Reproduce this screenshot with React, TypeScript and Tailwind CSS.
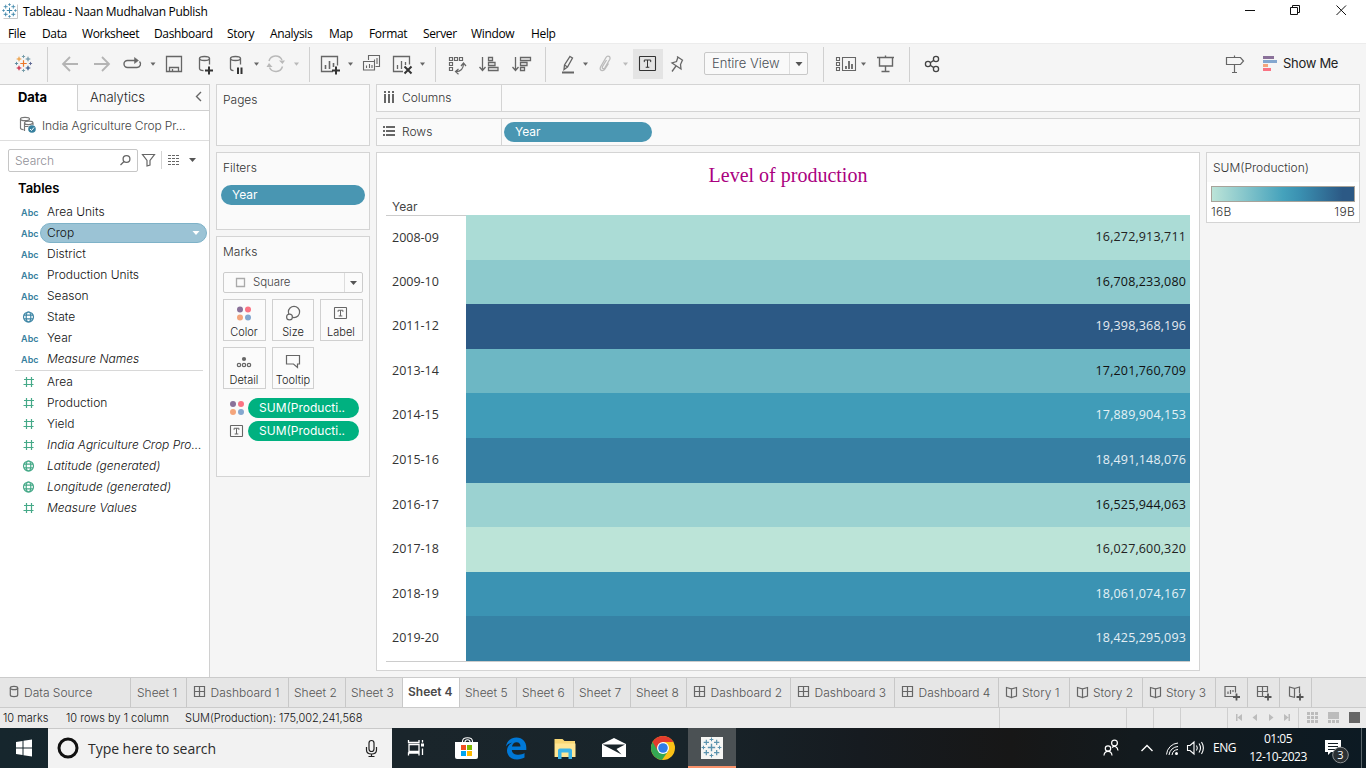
import React from "react";

type GlyphProps = { x: number; y: number; w: number; h: number; c?: string; sw?: number; children: React.ReactNode };

/* Drawing tile whose viewBox starts at (x, y), so neighbouring tiles share one coordinate system. */
function Glyph({ x, y, w, h, c = "#666666", sw = 1.3, children }: GlyphProps) {
  return (
    <svg className="block shrink-0" width={w} height={h} viewBox={`${x} ${y} ${w} ${h}`} fill="none" stroke={c} strokeWidth={sw}>
      {children}
    </svg>
  );
}

function Caret({ x, y = 64, c = "#666666" }: { x: number; y?: number; c?: string }) {
  return <path d={`M${x - 2.5} ${y - 1.5}h5l-2.5 3.2z`} fill={c} stroke="none" />;
}

function Plus({ x, y, r = 3, c, w = 1 }: { x: number; y: number; r?: number; c: string; w?: number }) {
  return <path d={`M${x - r} ${y}h${2 * r}M${x} ${y - r}v${2 * r}`} stroke={c} strokeWidth={w} />;
}

function TableauMark({ x, y, mono, s = 1 }: { x: number; y: number; mono?: string; s?: number }) {
  const c = (v: string) => mono ?? v;
  return (
    <g>
      <Plus x={x} y={y} r={3.2 * s} c={c("#eb762a")} w={1.2 * s} />
      <Plus x={x - 4.5 * s} y={y - 4.5 * s} r={2.3 * s} c={c("#eb9129")} w={1 * s} />
      <Plus x={x + 4.5 * s} y={y - 4.5 * s} r={2.3 * s} c={c("#5b879b")} w={1 * s} />
      <Plus x={x - 4.5 * s} y={y + 4.5 * s} r={2.3 * s} c={c("#c8102e")} w={1.1 * s} />
      <Plus x={x + 4.5 * s} y={y + 4.5 * s} r={2.3 * s} c={c("#1f447e")} w={1.1 * s} />
      <Plus x={x} y={y - 7 * s} r={1.6 * s} c={c("#7099a6")} w={0.9 * s} />
      <Plus x={x} y={y + 7 * s} r={1.6 * s} c={c("#7099a6")} w={0.9 * s} />
      <Plus x={x - 7 * s} y={y} r={1.6 * s} c={c("#59879b")} w={0.9 * s} />
      <Plus x={x + 7 * s} y={y} r={1.6 * s} c={c("#5c6692")} w={0.9 * s} />
    </g>
  );
}

function TBox({ x, y, w, h, c = "#666666" }: { x: number; y: number; w: number; h: number; c?: string }) {
  const cx = x + w / 2;
  return (
    <g stroke={c}>
      <rect x={x} y={y} width={w} height={h} rx="0.5" strokeWidth="1.1" />
      <path d={`M${cx - w * 0.2} ${y + h * 0.4}v${-h * 0.15}h${w * 0.4}v${h * 0.15}M${cx} ${y + h * 0.25}v${h * 0.52}M${cx - 1.8} ${y + h * 0.77}h3.6`} strokeWidth="1" />
    </g>
  );
}

function ColorDots({ x, y }: { x: number; y: number }) {
  return (
    <g stroke="none">
      <circle cx={x} cy={y} r="3" fill="#8a7199" />
      <circle cx={x + 8} cy={y} r="3" fill="#fa7383" />
      <circle cx={x} cy={y + 8} r="3" fill="#f4a57c" />
      <circle cx={x + 8} cy={y + 8} r="3" fill="#84a7cf" />
    </g>
  );
}

function Toolbar() {
  const T = (p: { x: number; w: number; c?: string; sw?: number; children: React.ReactNode }) => <Glyph y={44} h={40} {...p} />;
  const sep = (x: number) => <path d={`M${x + 0.5} 47v35`} stroke="#d0d0d0" strokeWidth="1" />;
  return (
    <div className="flex h-[41px] shrink-0 items-end border-t border-[#ececec] bg-[#f5f5f5]">
      <T x={0} w={56}><TableauMark x={23.5} y={63.5} />{sep(47)}</T>
      <T x={56} w={60} c="#b4b4b4" sw={1.8}>
        <path d="M78 64H63M70 57l-7 7 7 7" />
        <path d="M94 64h15M102 57l7 7-7 7" />
      </T>
      <T x={116} w={44} sw={1.400}>
        <path d="M137 60.500h-9.500a3.500 3.500 0 0 0 0 7h9.500a3.500 3.500 0 0 0 2.500-6" />
        <path d="M134.500 57.500l4 3-4 3z" fill="#666666" strokeWidth="0.5" />
        <Caret x={153} />
      </T>
      <T x={160} w={30}><path d="M166.500 56.500h15v15h-15zM169.500 71.500v-4h9v4M172.500 71.500v-2.500" /></T>
      <T x={190} w={72}>
        <ellipse cx="204.500" cy="58.500" rx="5" ry="2" />
        <path d="M199.500 58.500v10c0 1.500 2 2 4 2.200M209.500 58.500v6" />
        <path d="M205 70.500h8M209 66.500v8" stroke="#333333" strokeWidth="2" />
        <ellipse cx="235.500" cy="58.500" rx="5" ry="2" />
        <path d="M230.500 58.500v10c0 1.500 1.500 2 3 2.200M240.500 58.500v6" />
        <path d="M238 67.500v6.500M241.500 67.500v6.500" stroke="#333333" strokeWidth="2" />
        <Caret x={256.500} />
      </T>
      <T x={262} w={52} c="#b9b9b9" sw={1.5}>
        <path d="M269 61a7 7 0 0 1 13-1M282.500 66.500a7 7 0 0 1-13 1" />
        <path d="M279 60.500h6l-2.500 3.500zM266.500 67l2.500-4 3.500 4z" fill="#b9b9b9" stroke="none" />
        <Caret x={296.500} c="#b9b9b9" />{sep(309)}
      </T>
      <T x={314} w={44}>
        <path d="M333 71.500h-11.500v-15h16v9" />
        <path d="M325.500 69v-4M329.500 69v-8M333.500 67v-4" strokeWidth="1.600" />
        <path d="M332 70.500h8M336 66.500v8" stroke="#333333" strokeWidth="2" />
        <Caret x={350.500} />
      </T>
      <T x={358} w={28} sw={1.100}>
        <path d="M368.500 60v-4.500h11v11h-4M371.500 62v-1M374.500 64v-4.500M377 64v-6M363.500 61.500h11v8.500h-11zM366.500 68v-2.500M369.500 68v-4M372 68v-3" />
      </T>
      <T x={386} w={56}>
        <path d="M403 71.500h-9.500v-15h16v8M397.500 69v-4M401.500 69v-8M405.500 65v-3" />
        <path d="M404.500 66.500l7 7M411.500 66.500l-7 7" stroke="#333333" strokeWidth="2" />
        <Caret x={422.500} />{sep(435)}
      </T>
      <T x={442} w={30} sw={1.200}>
        <path d="M449.500 57.500h3v3h-3zM454.500 57.500h3v3h-3zM459.500 57.500h3v3h-3zM449.500 62.500h3v3h-3zM449.500 67.500h3v3h-3z" />
        <path d="M463.500 64c-.2 5-3 7.500-7.500 7.700M461 66l2.500-3 2.500 3M458.500 69l-3 2.600 3 2.600" />
      </T>
      <T x={472} w={34}>
        <path d="M482.500 57v13M479.500 67l3 3.500 3-3.500M488.500 57.500h4v3h-4zM488.500 62.500h6.500v3h-6.500zM488.500 67.500h9.500v3h-9.500z" />
      </T>
      <T x={506} w={46}>
        <path d="M515.500 57v13M512.500 67l3 3.500 3-3.500M520.500 57.500h10v3h-10zM520.500 62.500h6.500v3h-6.500zM520.500 67.500h4v3h-4z" />
        {sep(545)}
      </T>
      <T x={552} w={40}>
        <path d="M570 56.500l2.500 1.500-5 9-3.500 2.500.5-4.500zM564.500 65l3 2" />
        <path d="M562 72.500h12" strokeWidth="2" />
        <Caret x={585.500} />
      </T>
      <T x={592} w={41} c="#bbbbbb">
        <path d="M606.500 60l-4 6.500c-1 2 1.200 3 2.200 1.500l5-8.500c1.500-3-2.200-4.500-3.700-2l-5.500 9.500c-1.500 3.500 2.500 5 4.500 2l3.500-5.500" />
        <Caret x={625.500} c="#bbbbbb" />
      </T>
      <div className="mb-[5px] h-[30px] w-[30px] shrink-0 bg-[#e4e4e4]">
        <Glyph x={633} y={49} w={30} h={30} c="#333333"><TBox x={639.500} y={56.500} w={16} h={14} c="#333333" /></Glyph>
      </div>
      <T x={663} w={41}>
        <path d="M677 56.500l6 4M678 57l-1.500 4.500-4.500 1.500 9 6-.5-4.500 2-4.500M676 66l-4 5.500" />
      </T>
      <div className="mb-[9px] flex h-[23px] w-[104px] shrink-0 items-center rounded-[2px] border border-[#c8c8c8] bg-[#f9f9f9]">
        <span className="w-[84px] whitespace-nowrap pl-[7px] text-[13px] text-[#4b5057]">Entire View</span>
        <div className="h-[21px] border-l border-[#dddddd]">
          <Glyph x={789} y={53} w={17} h={21}><path d="M794.500 62h7l-3.500 4.200z" fill="#555" stroke="none" /></Glyph>
        </div>
      </div>
      <T x={808} w={62}>
        {sep(823)}
        <path d="M836.500 57.500h3v3h-3zM836.500 62.500h3v3h-3zM836.500 67.500h3v3h-3zM842.500 57.500h13v13h-13z" strokeWidth="1.100" />
        <path d="M846 69v-3M849 69v-8M852 69v-5" strokeWidth="1.800" />
        <Caret x={863.500} />
      </T>
      <T x={870} w={46}>
        <path d="M877 57.500h17M879.500 57.500v8.500h13v-8.500M885.500 66v5M881.500 71.500h8M885.500 55.500v2" strokeWidth="1.400" />
        {sep(909)}
      </T>
      <T x={916} w={30} c="#444444">
        <circle cx="928" cy="64" r="2.600" /><circle cx="936" cy="59" r="2.600" /><circle cx="936" cy="69" r="2.600" />
        <path d="M930.200 62.700l3.600-2.300M930.200 65.300l3.600 2.300" />
      </T>
      <div className="grow" />
      <T x={1216} w={66} sw={1.200}>
        <path d="M1226.500 57.500h14l3 3.500-3 3.500h-14zM1234.500 55.500v2M1234.500 64.500v8M1232 72.500h5" />
        <g stroke="none">
          <path d="M1263 56h11v3h-11z" fill="#8a7199" /><path d="M1263 60h14v3h-14z" fill="#84a7cf" />
          <path d="M1263 64h5v3h-5z" fill="#f4a57c" /><path d="M1263 68h8v3h-8z" fill="#fa7383" />
        </g>
      </T>
      <span className="mb-[10px] w-[84px] whitespace-nowrap pl-px text-[13px] font-normal leading-[21px] tracking-[-0.3px] text-[#222222]">Show Me</span>
    </div>
  );
}

function FieldIcon({ kind }: { kind: string }) {
  if (kind === "abc") return <span className="w-[47px] pl-[21px] pt-[2px] text-[9px] font-semibold tracking-[0.1px] text-[#37809e]">Abc</span>;
  const isHash = kind === "hash";
  const c = kind === "globeBlue" ? "#3f87a6" : "#45a988";
  return (
    <Glyph x={0} y={0} w={47} h={21} c={c} sw={1.200}>
      {isHash ? (
        <path d="M24 8.500h10M23.500 13.500h10M26.500 6v10M31.500 6v10" />
      ) : (
        <g><circle cx="28.500" cy="11" r="5" /><ellipse cx="28.500" cy="11" rx="2.300" ry="5" /><path d="M24 9.200h9M24 12.800h9" /></g>
      )}
    </Glyph>
  );
}

type FieldRow = { kind: string; name: string; italic?: boolean; selected?: boolean };

const dimensions: FieldRow[] = [
  { kind: "abc", name: "Area Units" },
  { kind: "abc", name: "Crop", selected: true },
  { kind: "abc", name: "District" },
  { kind: "abc", name: "Production Units" },
  { kind: "abc", name: "Season" },
  { kind: "globeBlue", name: "State" },
  { kind: "abc", name: "Year" },
  { kind: "abc", name: "Measure Names", italic: true },
];

const measures: FieldRow[] = [
  { kind: "hash", name: "Area" },
  { kind: "hash", name: "Production" },
  { kind: "hash", name: "Yield" },
  { kind: "hash", name: "India Agriculture Crop Pro...", italic: true },
  { kind: "globe", name: "Latitude (generated)", italic: true },
  { kind: "globe", name: "Longitude (generated)", italic: true },
  { kind: "hash", name: "Measure Values", italic: true },
];

function Field({ f }: { f: FieldRow }) {
  return (
    <div className="flex h-[21px] items-center whitespace-nowrap text-[12px] text-[#111111]">
      <FieldIcon kind={f.kind} />
      {f.selected ? (
        <div className="-ml-[7px] flex h-5 w-[167px] items-center justify-between rounded-full border border-[#7eb2c8] bg-[#9bc3d5] pl-[6px]">
          <span>{f.name}</span>
          <Glyph x={186} y={223} w={20} h={18}><path d="M192.500 230h7l-3.500 4z" fill="#fff" stroke="none" /></Glyph>
        </div>
      ) : (
        <span className={f.italic ? "italic" : ""}>{f.name}</span>
      )}
    </div>
  );
}

function DataPane() {
  return (
    <aside className="flex w-[210px] shrink-0 flex-col border-r border-t border-[#d0d0d0] bg-white">
      <div className="flex h-[26px] shrink-0">
        <div className="w-[77px] pl-[18px] text-[13px] font-bold leading-[25px] tracking-[-0.1px] text-black">Data</div>
        <div className="flex grow justify-between border-b border-l border-[#d0d0d0] bg-[#fafafa] pl-3 text-[13px] leading-[25px] text-[#222222]">
          Analytics
          <Glyph x={189} y={85} w={20} h={24} sw={1.400}><path d="M201 92l-4.500 4.500 4.500 4.500" /></Glyph>
        </div>
      </div>
      <div className="flex h-[30px] shrink-0 items-center border-b border-[#dedede]">
        <Glyph x={0} y={111} w={42} h={29} c="#777777" sw={1.200}>
          <ellipse cx="25" cy="119" rx="4.500" ry="1.700" />
          <path d="M20.500 119v9c0 1 1.500 1.600 3 1.700M24.500 123c0-2.500 8.500-2.500 8.500 0v2M24.500 123v8M24.500 123.500c1.500 1.500 6 1.500 8 0M24.500 126.500h4" />
          <circle cx="32" cy="129" r="3.800" fill="#37809e" stroke="none" />
          <path d="M30 129l1.500 1.500 2.500-3" stroke="#fff" strokeWidth="1" />
        </Glyph>
        <span className="whitespace-nowrap text-[12px] tracking-[-0.1px] text-[#444444]">India Agriculture Crop Pr...</span>
      </div>
      <div className="flex h-[39px] shrink-0 items-center pl-2">
        <div className="flex h-[23px] w-[130px] items-center justify-between rounded-[2px] border border-[#c6c6c6] pl-[6px]">
          <span className="text-[12px] text-[#8f8f96]">Search</span>
          <Glyph x={117} y={150} w={20} h={21}><circle cx="126.500" cy="159" r="3.400" /><path d="M124 161.500l-3.500 3.500" /></Glyph>
        </div>
        <Glyph x={138} y={150} w={62} h={22}>
          <path d="M142.500 154.500h12l-4.500 6v4.500l-3 1v-5.500z" strokeWidth="1.200" />
          <path d="M161.500 151v18" stroke="#d4d4d4" strokeWidth="1" />
          <path d="M168 155.500h12M168 158.500h12M168 161.500h12M168 164.500h12" strokeDasharray="3 1" strokeWidth="1.100" />
          <path d="M189 158h7l-3.500 4z" fill="#555" stroke="none" />
        </Glyph>
      </div>
      <div className="h-[21px] shrink-0 pl-[18px] text-[13px] font-semibold leading-[17px] text-black">Tables</div>
      {dimensions.map((f) => <Field key={f.name} f={f} />)}
      <div className="ml-[15px] mr-[6px] mt-px border-t border-[#d8d8d8]" />
      {measures.map((f) => <Field key={f.name} f={f} />)}
    </aside>
  );
}

function MarkButton({ label, children }: { label: string; children: React.ReactNode }) {
  return (
    <div className="flex h-[42px] flex-col border border-[#d0d0d0] bg-[#fbfbfb]">
      <svg className="block shrink-0" width="40" height="25" viewBox="0 0 40 25" fill="none" stroke="#666" strokeWidth="1.200">{children}</svg>
      <span className="w-10 self-start whitespace-nowrap text-center text-[11px] leading-[14px] text-[#222222]">{label}</span>
    </div>
  );
}

const cardClass = "shrink-0 border border-[#d4d4d4] bg-[#fafafa] text-[12px] text-[#333333]";

function Cards() {
  return (
    <div className="ml-[6px] flex w-[154px] shrink-0 flex-col gap-[6px]">
      <div className={`${cardClass} h-[62px] pl-[6px] pt-[6px]`}>Pages</div>
      <div className={`${cardClass} h-[78px] px-1 pt-[6px]`}>
        <div className="pl-[2px]">Filters</div>
        <div className="mt-2 h-5 rounded-full bg-[#4996b2] pl-[11px] text-[12px] font-normal leading-[20px] text-white">Year</div>
      </div>
      <div className={`${cardClass} flex h-[241px] flex-col px-[6px] pt-[6px]`}>
        <div>Marks</div>
        <div className="mt-[11px] flex h-[21px] w-[140px] shrink-0 items-center rounded-[2px] border border-[#cccccc] bg-[#fbfbfb]">
          <Glyph x={224} y={273} w={29} h={19} c="#aaaaaa"><path d="M236.500 278.500h8v8h-8z" /></Glyph>
          <span className="w-[91px] pt-px text-[11.500px] tracking-[-0.1px] text-[#444444]">Square</span>
          <div className="border-l border-[#dddddd]"><Glyph x={345} y={273} w={17} h={19}><path d="M350 281h7l-3.500 4z" fill="#555" stroke="none" /></Glyph></div>
        </div>
        <div className="mt-[6px] grid w-[140px] grid-cols-[43px_42px_43px] gap-[6px]">
          <MarkButton label="Color"><ColorDots x={16} y={9.500} /></MarkButton>
          <MarkButton label="Size"><circle cx="21" cy="12" r="5.600" fill="#fbfbfb" /><circle cx="16.500" cy="17" r="2.900" fill="#fbfbfb" /></MarkButton>
          <MarkButton label="Label"><TBox x={13.500} y={7.500} w={12} h={11} /></MarkButton>
          <MarkButton label="Detail">
            <circle cx="20" cy="11" r="2.100" fill="#666" stroke="none" />
            <circle cx="15" cy="17" r="1.700" /><circle cx="20" cy="17" r="1.700" /><circle cx="25" cy="17" r="1.700" />
          </MarkButton>
          <MarkButton label="Tooltip"><path d="M13.500 7.500h13v8.500h-2v3.500l-4-3.500h-7z" /></MarkButton>
        </div>
        <div className="mt-[9px] flex h-5 shrink-0 items-center text-[12px] font-normal text-white">
          <Glyph x={223} y={398} w={25} h={20}><ColorDots x={233} y={404} /></Glyph>
          <span className="h-5 w-[111px] rounded-full bg-[#00b180] pl-[11px] leading-[20px]">SUM(Producti..</span>
        </div>
        <div className="mt-[3px] flex h-5 shrink-0 items-center text-[12px] font-normal text-white">
          <Glyph x={223} y={421} w={25} h={20}><TBox x={230.500} y={425.500} w={12} h={11} /></Glyph>
          <span className="h-5 w-[111px] rounded-full bg-[#00b180] pl-[11px] leading-[20px]">SUM(Producti..</span>
        </div>
      </div>
    </div>
  );
}

const chartRows = [
  { year: "2008-09", value: "16,272,913,711", cls: "h-[45px] bg-[#abdcd6] text-[#222222]" },
  { year: "2009-10", value: "16,708,233,080", cls: "h-[44px] bg-[#8dcacd] text-[#111111]" },
  { year: "2011-12", value: "19,398,368,196", cls: "h-[45px] bg-[#2c5985] text-[#e4eaf0]" },
  { year: "2013-14", value: "17,201,760,709", cls: "h-[44px] bg-[#6db7c4] text-[#111111]" },
  { year: "2014-15", value: "17,889,904,153", cls: "h-[45px] bg-[#409cb8] text-[#e4f2f6]" },
  { year: "2015-16", value: "18,491,148,076", cls: "h-[45px] bg-[#367fa3] text-[#e4eef4]" },
  { year: "2016-17", value: "16,525,944,063", cls: "h-[44px] bg-[#9bd2d1] text-[#111111]" },
  { year: "2017-18", value: "16,027,600,320", cls: "h-[45px] bg-[#bce4d8] text-[#222222]" },
  { year: "2018-19", value: "18,061,074,167", cls: "h-[44px] bg-[#3b93b3] text-[#e4f2f6]" },
  { year: "2019-20", value: "18,425,295,093", cls: "h-[45px] bg-[#3682a5] text-[#e4eef4]" },
];

function Workspace() {
  return (
    <div className="ml-[6px] flex w-[984px] shrink-0 flex-col gap-[6px]">
      <div className={`${cardClass} flex h-7`}>
        <div className="flex w-[125px] items-center border-r border-[#d4d4d4]">
          <Glyph x={377} y={85} w={25} h={26} sw={2}>
            <path d="M385 91v12M389 91v12M393 91v12" strokeWidth="2" />
            <path d="M383 93.500h12" stroke="#fafafa" strokeWidth="1" />
          </Glyph>
          <span>Columns</span>
        </div>
      </div>
      <div className={`${cardClass} flex h-7 items-center`}>
        <div className="flex h-full w-[125px] items-center border-r border-[#d4d4d4]">
          <Glyph x={377} y={119} w={25} h={26}><path d="M383 127h12M383 131h12M383 135h12" strokeDasharray="2 1 10" strokeWidth="2" /></Glyph>
          <span>Rows</span>
        </div>
        <div className="ml-[2px] h-5 w-[148px] rounded-full bg-[#4996b2] pl-[11px] font-normal leading-[20px] text-white">Year</div>
      </div>
      <div className="flex items-start gap-[6px]">
        <div className="h-[519px] w-[824px] border border-[#d4d4d4] bg-white px-[9px]">
          <div className="h-[45px] pt-[9px] text-center font-['Liberation_Serif',serif] text-[20px] font-normal leading-[26px] text-[#aa0080]">Level of production</div>
          <div className="h-[17px] pl-[6px] text-[12px] font-normal leading-[17px] text-[#444444]">Year</div>
          <div className="flex flex-col border-b border-t border-[#cccccc]">
            {chartRows.map((r, i) => (
              <div key={r.year} className="flex font-['Open_Sans',sans-serif] text-[12.500px] font-normal text-[#333333]">
                <div className="flex w-[80px] items-center pl-[6px]">{r.year}</div>
                <div className={`${r.cls} ${i === 0 ? "-mt-px" : ""} flex w-[724px] items-center justify-end pr-1 tracking-[0.150px]`}>{r.value}</div>
              </div>
            ))}
          </div>
        </div>
        <div className="h-[71px] w-[154px] border border-[#d4d4d4] bg-white text-[12px] text-[#333333]">
          <div className="h-[29px] bg-[#fafafa] pl-[6px] leading-[30px]">SUM(Production)</div>
          <div className="mx-1 mt-1 h-4 border border-[#a8a39a] bg-[linear-gradient(90deg,#bce4d8_0%,#8dcacd_20%,#45a2bc_50%,#3a90b1_62%,#2c5985_92%)]" />
          <div className="flex justify-between px-1 leading-[19px] tracking-[0.3px]"><span>16B</span><span>19B</span></div>
        </div>
      </div>
    </div>
  );
}

const gridPath = (x: number) => `M${x} 686.500h10v10h-10zM${x + 5} 686.500v10M${x} 691.500h10`;
const bookPath = (x: number) => `M${x} 687.500l5 1.500v8.500l-5-1.500zM${x + 10} 687.500l-5 1.500v8.500l5-1.500zM${x} 687v9M${x + 10} 687v9`;

const sheetTabs = [
  { name: "Data Source", icon: "db", cls: "w-[131px] pl-[5px]" },
  { name: "Sheet 1", icon: "", cls: "w-[56px] pl-[6px]" },
  { name: "Dashboard 1", icon: "grid", cls: "w-[102px] pl-[4px]" },
  { name: "Sheet 2", icon: "", cls: "w-[57px] pl-[5px]" },
  { name: "Sheet 3", icon: "", cls: "w-[57px] pl-[5px]" },
  { name: "Sheet 4", icon: "", cls: "w-[57px] pl-[5px] bg-white font-semibold text-[#4a4a4a] pb-[2px]" },
  { name: "Sheet 5", icon: "", cls: "w-[57px] pl-[5px]" },
  { name: "Sheet 6", icon: "", cls: "w-[57px] pl-[5px]" },
  { name: "Sheet 7", icon: "", cls: "w-[57px] pl-[5px]" },
  { name: "Sheet 8", icon: "", cls: "w-[56px] pl-[5px]" },
  { name: "Dashboard 2", icon: "grid", cls: "w-[104px] pl-[4px]" },
  { name: "Dashboard 3", icon: "grid", cls: "w-[104px] pl-[4px]" },
  { name: "Dashboard 4", icon: "grid", cls: "w-[104px] pl-[4px]" },
  { name: "Story 1", icon: "book", cls: "w-[71px] pl-[4px]" },
  { name: "Story 2", icon: "book", cls: "w-[73px] pl-[4px]" },
  { name: "Story 3", icon: "book", cls: "w-[73px] pl-[4px]" },
];

function SheetTabs() {
  return (
    <div className="flex h-[31px] shrink-0 border-b border-t border-[#cbcbcb] bg-[#e6e6e6] text-[12px] text-[#555555]">
      {sheetTabs.map((t) => (
        <div key={t.name} className={`${t.cls} flex shrink-0 items-center whitespace-nowrap border-r border-[#c8c8c8]`}>
          {t.icon !== "" && (
            <Glyph x={0} y={678} w={t.icon === "grid" ? 19.500 : 19} h={29} sw={1.200}>
              {t.icon === "grid" && <path d={gridPath(3.500)} />}
              {t.icon === "book" && <path d={bookPath(3.500)} />}
              {t.icon === "db" && <g><ellipse cx="9" cy="688" rx="3.700" ry="1.700" /><path d="M5.300 688v7c0 2.200 7.400 2.200 7.400 0v-7" /></g>}
            </Glyph>
          )}
          {t.name}
        </div>
      ))}
      <div className="border-r border-[#c8c8c8]">
        <Glyph x={1216} y={678} w={31} h={29} sw={1.200}><path d="M1233 696.500h-8v-10h10.500v6M1228 694v-2.500M1230.500 694v-4M1233 692v-2" /><path d="M1233 697h7M1236.500 693.500v7" stroke="#555" strokeWidth="1.800" /></Glyph>
      </div>
      <div className="border-r border-[#c8c8c8]">
        <Glyph x={1248} y={678} w={31} h={29} sw={1.200}><path d="M1264 696.500h-6.500v-10h10v6M1262.500 686.500v10M1257.500 691.500h10" /><path d="M1264.500 697h7M1268 693.500v7" stroke="#555" strokeWidth="1.800" /></Glyph>
      </div>
      <div className="border-r border-[#c8c8c8]">
        <Glyph x={1280} y={678} w={31} h={29} sw={1.200}><path d="M1295 697.500l-5.500-1.500v-9l5 1.500v8.500M1294.500 688.500l5-1.500v6" /><path d="M1296.500 697h7M1300 693.500v7" stroke="#555" strokeWidth="1.800" /></Glyph>
      </div>
    </div>
  );
}

function StatusBar() {
  return (
    <div className="flex h-5 shrink-0 items-center whitespace-nowrap bg-[#ebebeb] text-[11px] text-[#111111]">
      <span className="w-[66px] pl-[3px]">10 marks</span>
      <span className="w-[119px]">10 rows by 1 column</span>
      <span className="w-[814px]">SUM(Production): 175,002,241,568</span>
      <Glyph x={999} y={708} w={367} h={20} c="#cfcfcf" sw={1}>
        <path d="M999.500 708v20M1126.500 708v20M1153.500 708v20M1180.500 708v20M1227.500 708v20M1298.500 708v20" />
        <g fill="#bcbcbc" stroke="none">
          <path d="M1236 714h1.500v7h-1.500zM1242 714v7l-4.500-3.500z" />
          <path d="M1257 714v7l-4.500-3.500zM1269 714v7l4.500-3.500z" />
          <path d="M1288.500 714h1.500v7h-1.500zM1284 714v7l4.500-3.500z" />
          <path d="M1307 712h3v3h-3zM1311 712h3v3h-3zM1315 712h3v3h-3zM1307 716h3v3h-3zM1311 716h3v3h-3zM1315 716h3v3h-3zM1307 720h3v3h-3zM1311 720h3v3h-3zM1315 720h3v3h-3z" />
          <path d="M1328 712h11v7h-11zM1328 720h3v3h-3zM1332 720h3v3h-3zM1336 720h3v3h-3z" />
          <path d="M1349 712h11v11h-11z" fill="#666666" />
        </g>
      </Glyph>
    </div>
  );
}

function Taskbar() {
  return (
    <div className="flex h-10 shrink-0 bg-[linear-gradient(90deg,#16262d_0%,#1a252b_30%,#18242a_50%,#161b20_63%,#171717_74%,#131a1e_83%,#0c1a23_100%)] font-['Open_Sans',sans-serif] font-normal text-white">
      <Glyph x={0} y={728} w={48} h={40}>
        <path d="M16 742l6.500-1v6.500h-6.500zM23.500 740.800l8.500-1.200v7.900h-8.500zM16 748.500h6.500v6.500l-6.500-1zM23.500 748.500h8.500v7.900l-8.500-1.200z" fill="#fff" stroke="none" />
      </Glyph>
      <div className="flex w-[344px] shrink-0 items-center border-t border-[#c9c9c9] bg-[#f2f2f2]">
        <Glyph x={48} y={729} w={40} h={39} c="#111"><circle cx="68" cy="748" r="9" strokeWidth="3" /></Glyph>
        <span className="w-[270px] whitespace-nowrap text-[14px] tracking-[-0.040px] text-[#2b2b2b]">Type here to search</span>
        <Glyph x={358} y={729} w={33} h={39} c="#222" sw={1.200}>
          <rect x="369" y="740.500" width="5" height="11" rx="2.500" /><path d="M366.500 747v3c0 2 1.500 4 5 4s5-2 5-4v-3M371.500 754v2.500M368.500 756.500h6" />
        </Glyph>
      </div>
      <Glyph x={392} y={728} w={296} h={40} c="#fff" sw={1.300}>
        <path d="M408.500 740v2.500h10.500v-2.500M409 744.500h10v7h-10zM408.500 755.500v-2.500h10.500v2.500M422.500 740v2.500M422.500 748.500v6.500" />
        <rect x="421" y="743.500" width="3" height="3" fill="#fff" stroke="none" />
        <path d="M462.500 743v-1.500c0-5 10-5 10 0v1.500M465 743v-1c0-3 5-3 5 0v1" strokeWidth="1.100" />
        <path d="M455 742h23v15a2 2 0 0 1-2 2h-19a2 2 0 0 1-2-2z" fill="#fff" stroke="none" />
        <g stroke="none">
          <path d="M461 745h5v5h-5z" fill="#f25022" /><path d="M467 745h5v5h-5z" fill="#7fba00" />
          <path d="M461 751h5v5h-5z" fill="#00a4ef" /><path d="M467 751h5v5h-5z" fill="#ffb900" />
          <path d="M506 746.500c1-6 5.500-9 10.500-9 6 0 9.800 4.500 9.800 10v2.500h-14.500c.3 3.300 3.200 4.800 6.700 4.800 2.500 0 4.700-.7 6-1.700v4.500c-2 1.200-4.500 1.800-7.300 1.800-6.200 0-10.200-3.800-10.200-8.800 0-4 2.500-6.500 5.500-8-3 .5-5 1.800-6.500 3.900zM512 746.500h8.500c0-2.500-1.200-4.300-3.900-4.300-2.600 0-4.300 2-4.600 4.300z" fill="#0078d7" fillRule="evenodd" />
          <path d="M554.500 739h8l2 2h10.500v16h-20.500z" fill="#f8d775" /><path d="M555 743.500h20.500v13.500h-20.500z" fill="#ffe694" />
          <path d="M558 757v-6.500a2 2 0 0 1 2-2h10a2 2 0 0 1 2 2v8.500h-3.500v-6.500h-7v6.500h-3.500z" fill="#3bb4e8" />
          <path d="M602 744l12-6 12 6v13h-24z" fill="#fff" /><path d="M602.500 744.500h22.500l-8.500 4.500 5 5.500z" fill="#1a252b" />
          <circle cx="663" cy="748" r="12" fill="#fbc116" />
          <path d="M652.600 742A12 12 0 0 0 662 760l6.200-9L663 748z" fill="#34a853" />
          <path d="M652.600 742A12 12 0 0 1 673.400 742H663L658 751z" fill="#e33b2e" />
          <circle cx="663" cy="748" r="6" fill="#fff" /><circle cx="663" cy="748" r="4.800" fill="#2f7de9" />
        </g>
      </Glyph>
      <div className="h-10 w-12 shrink-0 border-b-2 border-[#f9926b] bg-[#4b5154]">
        <Glyph x={688} y={728} w={48} h={38}>
          <rect x="701" y="737" width="22" height="22" fill="#f6f6f4" stroke="none" />
          <TableauMark x={711.500} y={747.500} mono="#5b93ae" s={1.150} />
        </Glyph>
      </div>
      <div className="grow" />
      <Glyph x={1096} y={728} w={116} h={40} c="#fff" sw={1.200}>
        <circle cx="1108" cy="748.500" r="2.700" /><circle cx="1114.500" cy="743" r="2.900" />
        <path d="M1104 755.500c.3-5.500 7.700-5.500 8 0M1112 747.500c2.500-2 5.500-1 6 3" />
        <path d="M1141.500 751l5.500-5.500 5.500 5.500" strokeWidth="1.400" />
        <path d="M1166.500 754.500a12.500 12.500 0 0 1 11.500-11.500M1169 755a9.500 9.500 0 0 1 9-8.500M1172 755a6.500 6.500 0 0 1 6-5.500" strokeWidth="1" />
        <circle cx="1176.500" cy="753.500" r="1.500" fill="#fff" stroke="none" />
        <path d="M1187.500 745.500h2.500l4-3.500v12l-4-3.500h-2.500zM1196.500 745.500c1 1.500 1 3.500 0 5M1199 743.500c2 3 2 6 0 9M1201.500 742c2.500 4 2.500 8 0 12" strokeWidth="1.100" />
      </Glyph>
      <span className="w-[36px] pl-px text-[12px] leading-[40px] tracking-[-0.5px]">ENG</span>
      <div className="flex w-[60px] flex-col items-center whitespace-nowrap pt-[2px] text-[12px] leading-[18px] tracking-[-0.5px]"><span>01:05</span><span>12-10-2023</span></div>
      <Glyph x={1308} y={728} w={58} h={40}>
        <path d="M1325 740h16v12h-10l-3 3v-3h-3z" fill="#fff" stroke="none" />
        <path d="M1328 743.500h10M1328 746.500h10M1328 749.500h7" stroke="#111b22" strokeWidth="1" />
        <circle cx="1340.500" cy="755" r="7.800" fill="#2b3033" stroke="#8b8f91" strokeWidth="1" />
        <text x="1340.500" y="759" textAnchor="middle" fontSize="11" fill="#fff" stroke="none">3</text>
        <path d="M1361.500 728v40" stroke="#59646a" strokeWidth="1" />
      </Glyph>
    </div>
  );
}

const menus = [
  ["File", "w-[34px]"], ["Data", "w-[40px]"], ["Worksheet", "w-[72px]"], ["Dashboard", "w-[73px]"], ["Story", "w-[43px]"],
  ["Analysis", "w-[59px]"], ["Map", "w-[40px]"], ["Format", "w-[54px]"], ["Server", "w-[48px]"], ["Window", "w-[60px]"], ["Help", "w-[40px]"],
];

export default function App() {
  return (
    <div className="flex h-[768px] w-[1366px] flex-col overflow-hidden bg-[#f5f5f5] font-['Inter',sans-serif] font-light">
      <div className="flex h-6 shrink-0 items-center bg-white font-['Open_Sans',sans-serif] font-normal">
        <Glyph x={0} y={0} w={23} h={24}>
          <path d="M3.500 18.500h14v-14" stroke="#c8c8c8" strokeWidth="1" /><TableauMark x={9.500} y={10.500} mono="#3f86aa" s={0.850} />
        </Glyph>
        <span className="whitespace-nowrap text-[12px] tracking-[-0.3px] text-black">Tableau - Naan Mudhalvan Publish</span>
        <div className="grow" />
        <Glyph x={1236} y={0} w={130} h={24} c="#111" sw={1}>
          <path d="M1245 10.500h10M1290.500 7.500h7v7h-7zM1292.500 7.500v-2h7v7h-2M1336.500 5.500l9.500 9.500M1346 5.500l-9.500 9.500" />
        </Glyph>
      </div>
      <div className="flex h-[19px] shrink-0 items-center whitespace-nowrap bg-white pl-2 font-['Open_Sans',sans-serif] text-[12px] font-normal tracking-[-0.35px] text-black">
        {menus.map(([label, cls]) => <span key={label} className={cls}>{label}</span>)}
      </div>
      <Toolbar />
      <div className="flex h-[593px] shrink-0">
        <DataPane />
        <Cards />
        <Workspace />
      </div>
      <SheetTabs />
      <StatusBar />
      <Taskbar />
    </div>
  );
}
